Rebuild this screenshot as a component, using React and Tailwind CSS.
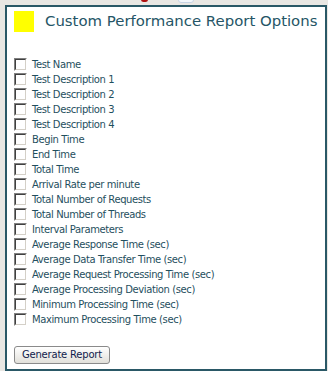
import React from "react";

const items = [
  "Test Name",
  "Test Description 1",
  "Test Description 2",
  "Test Description 3",
  "Test Description 4",
  "Begin Time",
  "End Time",
  "Total Time",
  "Arrival Rate per minute",
  "Total Number of Requests",
  "Total Number of Threads",
  "Interval Parameters",
  "Average Response Time (sec)",
  "Average Data Transfer Time (sec)",
  "Average Request Processing Time (sec)",
  "Average Processing Deviation (sec)",
  "Minimum Processing Time (sec)",
  "Maximum Processing Time (sec)",
];

function Box() {
  return (
    <span className="block w-[13px] h-[13px] border border-t-[#808080] border-l-[#808080] border-r-[#ffffff] border-b-[#ffffff] bg-white">
      <span className="block w-[11px] h-[11px] border border-t-[#404040] border-l-[#404040] border-r-[#d4d0c8] border-b-[#d4d0c8] bg-white" />
    </span>
  );
}

export default function App() {
  return (
    <div className="relative w-[328px] h-[371px] bg-[#e9e7e3] pt-[5px] pl-[5px] overflow-hidden" style={{ fontFamily: '"DejaVu Sans", Verdana, sans-serif' }}>
      <div className="absolute left-[141px] top-[-3px] w-[7px] h-[5px] rounded-full bg-[#b01010]" />
      <div className="absolute left-[178px] top-[-3px] w-[16px] h-[6px] rounded-sm border border-[#c8d4e4] bg-[#f4f7fb]" />
      <div className="w-[322px] h-[366px] border-2 border-[#2a5866] bg-white pl-[7px] pt-[4px]">
        <div className="flex items-center h-[21px]">
          <div className="w-[20px] h-[21px] bg-[#ffff00]" />
          <div className="ml-[11px] text-[14.9px] text-[#255566] leading-none whitespace-nowrap">Custom Performance Report Options</div>
        </div>
        <div className="mt-[25px] flex flex-col">
          {items.map((t) => (
            <label key={t} className="flex items-center h-[15px]">
              <Box />
              <span className="ml-[5px] text-[10px] tracking-[-0.4px] text-[#1f4f5e] leading-none whitespace-nowrap">{t}</span>
            </label>
          ))}
        </div>
        <button className="mt-[19px] w-[96px] h-[18px] rounded-[3px] border border-[#8a8a8a] bg-gradient-to-b from-[#ffffff] to-[#e2e0da] text-[10px] tracking-[-0.2px] text-[#101c4c] leading-none flex items-center justify-center">
          Generate Report
        </button>
      </div>
    </div>
  );
}
